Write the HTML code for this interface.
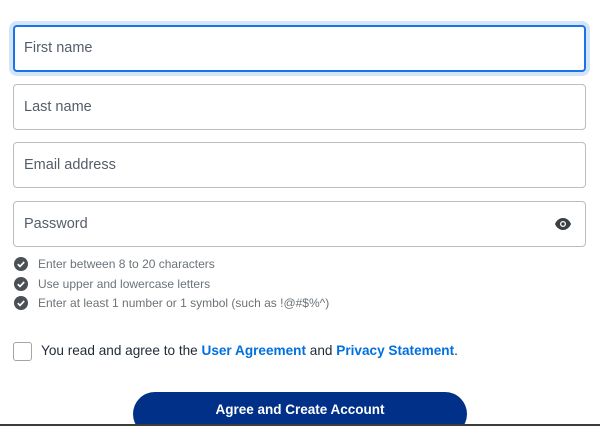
<!DOCTYPE html>
<html style="overflow:hidden"><head><style>
html,body{margin:0;width:600px;height:426px;overflow:hidden}
body{background:#fff;position:relative;font-family:"Liberation Sans",sans-serif}
.f{position:absolute;left:13px;width:573px;height:46px;border:1px solid #bdbdbd;border-radius:4px;box-sizing:border-box;font-size:14.5px;color:#545d68;padding-left:10px;line-height:44px}
.foc{border:2px solid #1a73e8;box-shadow:0 0 0 4px #d4e4f9;padding-left:9px;line-height:42px}
.c{position:absolute;left:14px;font-size:12px;color:#6c7378;height:14px;line-height:14px}
.c svg{position:absolute;left:0;top:0}
.c span{position:absolute;left:24px;white-space:nowrap}
</style></head><body>
<div class="f foc" style="top:25px;height:47px">First name</div>
<div class="f" style="top:84px">Last name</div>
<div class="f" style="top:142px">Email address</div>
<div class="f" style="top:201px">Password
<svg style="position:absolute;right:14px;top:16px" width="16" height="12" viewBox="0 0 16 12"><path d="M8 0C4 0 1.2 3 0 6c1.2 3 4 6 8 6s6.8-3 8-6C14.8 3 12 0 8 0z" fill="#3a3f44"/><circle cx="8" cy="6" r="3" fill="#fff"/><circle cx="8" cy="6" r="1.7" fill="#3a3f44"/></svg></div>
<div class="c" style="top:257px"><svg width="14" height="14"><circle cx="7" cy="7" r="7" fill="#4a5056"/><path d="M3.8 7.2l2.2 2.2 4.2-4.4" stroke="#fff" stroke-width="1.7" fill="none"/></svg><span>Enter between 8 to 20 characters</span></div>
<div class="c" style="top:277px"><svg width="14" height="14"><circle cx="7" cy="7" r="7" fill="#4a5056"/><path d="M3.8 7.2l2.2 2.2 4.2-4.4" stroke="#fff" stroke-width="1.7" fill="none"/></svg><span>Use upper and lowercase letters</span></div>
<div class="c" style="top:296px"><svg width="14" height="14"><circle cx="7" cy="7" r="7" fill="#4a5056"/><path d="M3.8 7.2l2.2 2.2 4.2-4.4" stroke="#fff" stroke-width="1.7" fill="none"/></svg><span>Enter at least 1 number or 1 symbol (such as !@#$%^)</span></div>
<div style="position:absolute;left:13px;top:342px;width:17px;height:17px;border:1px solid #a5a5a5;border-radius:3px"></div>
<div style="position:absolute;left:41px;top:343px;font-size:13.6px;color:#1f2a36;white-space:nowrap">You read and agree to the <b style="color:#0070e0">User Agreement</b> and <b style="color:#0070e0">Privacy Statement</b>.</div>
<div style="position:absolute;left:133px;top:392px;width:334px;height:44px;border-radius:22px;background:#003087;color:#fff;font-weight:bold;font-size:13.5px;text-align:center;line-height:36px">Agree and Create Account</div>
<div style="position:absolute;left:0;top:424px;width:600px;height:2px;background:#3c3c3c"></div>
</body></html>
